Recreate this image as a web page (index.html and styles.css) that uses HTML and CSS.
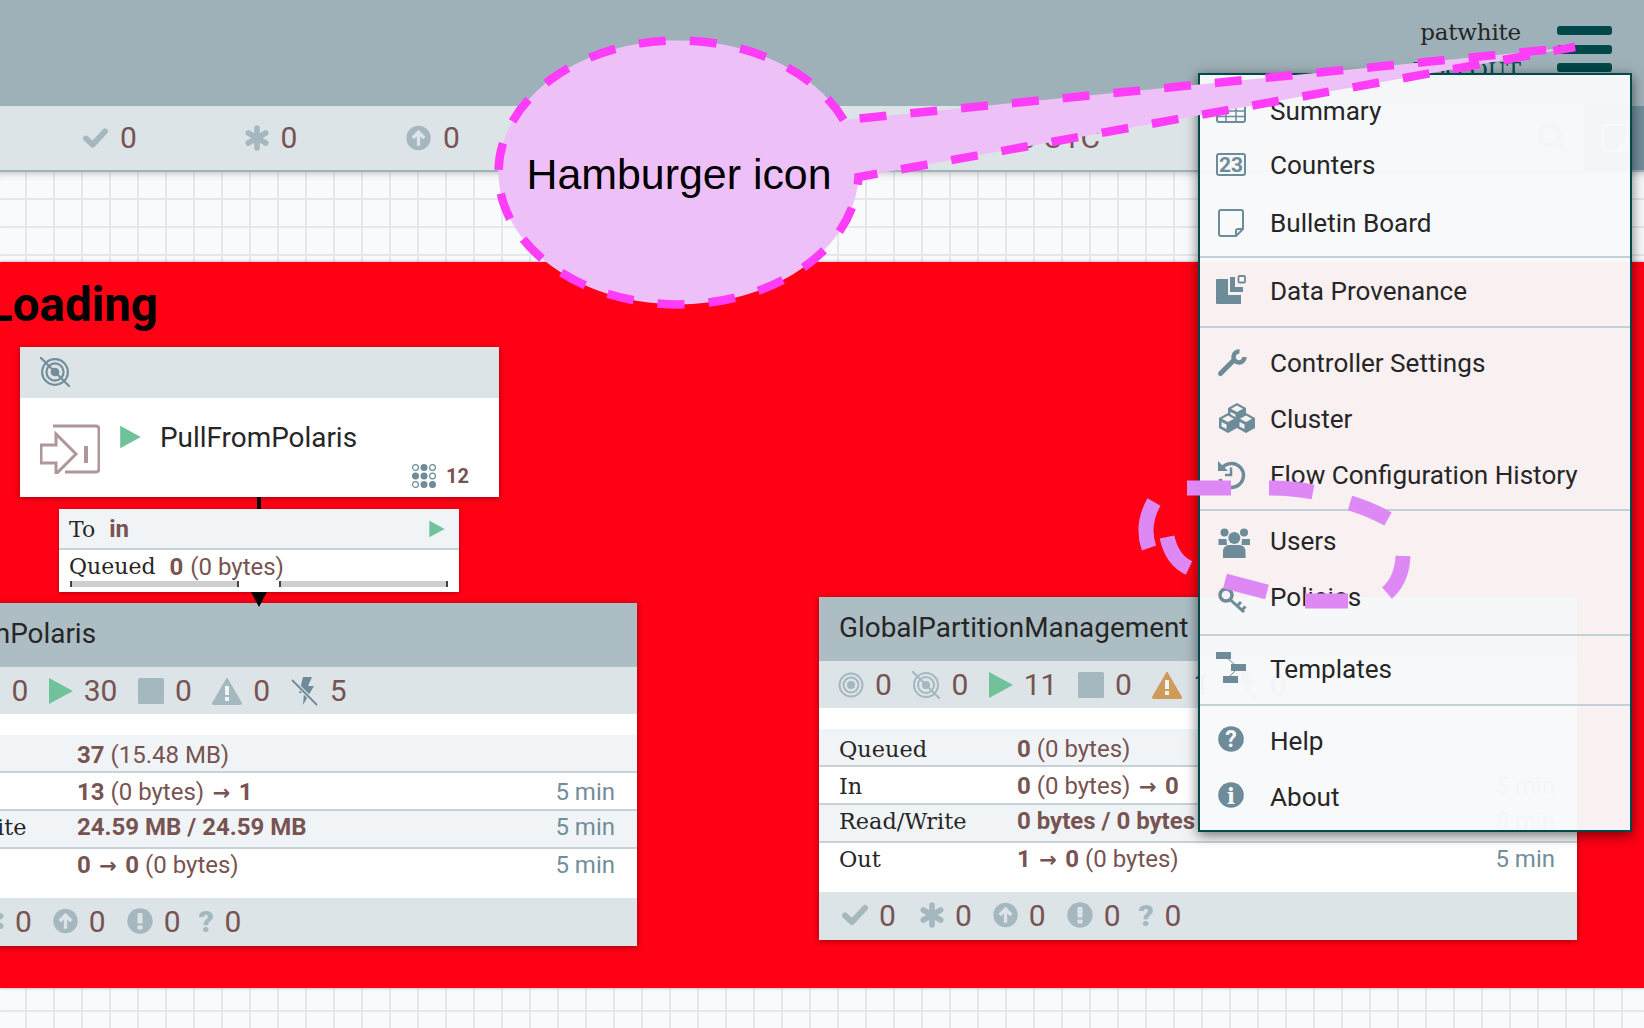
FILE: index.html
```html
<!DOCTYPE html>
<html lang="en">
<head>
<meta charset="utf-8">
<title>NiFi canvas</title>
<link rel="stylesheet" href="styles.css">
</head>
<body>
<svg class="defs" xmlns="http://www.w3.org/2000/svg">
  <symbol id="i-target" viewBox="0 0 26 26" overflow="visible"><circle cx="13" cy="13" r="11.500" fill="none" stroke="currentColor" stroke-width="2"/><circle cx="13" cy="13" r="7.500" fill="none" stroke="currentColor" stroke-width="2"/><circle cx="13" cy="13" r="4" fill="currentColor"/></symbol>
  <symbol id="i-notarget" viewBox="0 0 28 28" overflow="visible"><circle cx="14" cy="14" r="12" fill="none" stroke="currentColor" stroke-width="2"/><circle cx="14" cy="14" r="8" fill="none" stroke="currentColor" stroke-width="2"/><circle cx="14" cy="14" r="4" fill="currentColor"/><path d="M0 0L28 28" stroke="currentColor" stroke-width="2"/></symbol>
  <symbol id="i-play" viewBox="0 0 24 28"><path d="M0 1L24 14L0 27Z" fill="currentColor"/></symbol>
  <symbol id="i-stop" viewBox="0 0 26 26"><rect width="26" height="26" rx="1.500" fill="currentColor"/></symbol>
  <symbol id="i-warn" viewBox="0 0 30 28"><path d="M15 1L29.500 26a1 1 0 0 1-1 1.500H1.500a1 1 0 0 1-1-1.500Z" fill="currentColor" stroke="currentColor" stroke-linejoin="round"/><rect x="13" y="9" width="4" height="9" fill="#f1f4f6"/><rect x="13" y="20" width="4" height="4" fill="#f1f4f6"/></symbol>
  <symbol id="i-bolt" viewBox="0 0 28 30"><path d="M12 1h9l-4 9h6L12 29l1-12H8Z" fill="#6d8b98"/><path d="M1 4L26 29" stroke="#dde4e7" stroke-width="4"/><path d="M1 4L26 29" stroke="#6d8b98" stroke-width="1.800"/></symbol>
  <symbol id="i-check" viewBox="0 0 26 22"><path d="M3 11.500L10 18L23 4" fill="none" stroke="currentColor" stroke-width="6" stroke-linejoin="round" stroke-linecap="round"/></symbol>
  <symbol id="i-star" viewBox="0 0 24 26"><path d="M12 3v20M3.300 8l17.400 10M20.700 8L3.300 18" stroke="currentColor" stroke-width="5.600" stroke-linecap="round"/></symbol>
  <symbol id="i-up" viewBox="0 0 26 26"><circle cx="13" cy="13" r="12.700" fill="currentColor"/><path d="M13 21V8M7 13l6-6 6 6" fill="none" stroke="#dde4e7" stroke-width="3.500"/></symbol>
  <symbol id="i-bang" viewBox="0 0 26 26"><circle cx="13" cy="13" r="12.700" fill="currentColor"/><rect x="10.500" y="5" width="5" height="10.500" rx="1" fill="#dde4e7"/><rect x="10.500" y="17.500" width="5" height="4" rx="1" fill="#dde4e7"/></symbol>
  <symbol id="i-table" viewBox="0 0 32 32"><rect x="2" y="5" width="28" height="22" rx="2" fill="none" stroke="currentColor" stroke-width="2"/><path d="M2 10h28M2 16h28M2 21.500h28M11 10v17M21 10v17" stroke="currentColor" stroke-width="1.500"/></symbol>
  <symbol id="i-note" viewBox="0 0 32 32"><path d="M6 3h20a2 2 0 0 1 2 2v17l-7 7H6a2 2 0 0 1-2-2V5a2 2 0 0 1 2-2z" fill="none" stroke="currentColor" stroke-width="2" stroke-linejoin="round"/><path d="M28 22h-5a2 2 0 0 0-2 2v5" fill="none" stroke="currentColor" stroke-width="2"/></symbol>
  <symbol id="i-prov" viewBox="0 0 32 32"><path d="M2 4h11v16h13v9H2a1 1 0 0 1-1-1V5a1 1 0 0 1 1-1z" fill="currentColor"/><path d="M15 2h5v10h8v5H15z" fill="currentColor"/><rect x="23.500" y="1" width="6.500" height="6.500" rx="1" fill="#f8f9fa" stroke="currentColor" stroke-width="1.800"/></symbol>
  <symbol id="i-wrench" viewBox="0 0 32 32"><path d="M5.500 26.500L19 13" stroke="currentColor" stroke-width="5" stroke-linecap="round"/><path d="M24.500 4.500A5.500 5.500 0 1 0 29.500 10" fill="none" stroke="currentColor" stroke-width="4.500"/></symbol>
  <symbol id="i-cube" viewBox="0 0 20 22"><path d="M10 1L19 6V16L10 21L1 16V6Z" fill="currentColor"/><path d="M10 3.500L16 6.800L10 10L4 6.800Z" fill="#f7f2f2"/><path d="M3.500 10L8.500 12.500V17L3.500 14.500Z" fill="#f7f2f2"/></symbol>
  <symbol id="i-history" viewBox="0 0 32 32"><path d="M7 9A12 12 0 1 1 5 20" fill="none" stroke="currentColor" stroke-width="3.500"/><path d="M3 2v10h10Z" fill="currentColor"/><path d="M16 8.500V16H10" fill="none" stroke="currentColor" stroke-width="2.500"/></symbol>
  <symbol id="i-key" viewBox="0 0 32 32"><circle cx="11" cy="14" r="6" fill="none" stroke="currentColor" stroke-width="3.500"/><path d="M15 18.500L29 31M22 25l4-4M27 29l3.500-3.500" fill="none" stroke="currentColor" stroke-width="3"/></symbol>
  <symbol id="i-threads" viewBox="0 0 24 24"><g fill="currentColor"><circle cx="12" cy="3.500" r="3.500"/><circle cx="3.500" cy="12" r="3.500"/><circle cx="12" cy="12" r="3.500"/><circle cx="12" cy="20.500" r="3.500"/><circle cx="20.500" cy="20.500" r="3.500"/></g><g fill="none" stroke="currentColor" stroke-width="1.200"><circle cx="3.500" cy="3.500" r="2.900"/><circle cx="20.500" cy="3.500" r="2.900"/><circle cx="20.500" cy="12" r="2.900"/><circle cx="3.500" cy="20.500" r="2.900"/></g></symbol>
</svg>

<header class="top">
  <div class="user">
    <div class="user-name">patwhite</div>
    <div class="user-out">LOG OUT</div>
  </div>
  <div class="burger"><span></span><span></span><span></span></div>
</header>

<div class="toolbar">
  <div class="tb-item"><svg class="s-ic w25"><use href="#i-check"/></svg><span>0</span></div>
  <div class="tb-item"><svg class="s-ic w24"><use href="#i-star"/></svg><span>0</span></div>
  <div class="tb-item"><svg class="s-ic w25"><use href="#i-up"/></svg><span>0</span></div>
  <div class="tb-time">09:15:10 UTC</div>
  <div class="tb-search"><svg class="tb-search-ic" viewBox="0 0 32 32"><circle cx="13" cy="13" r="10" fill="none" stroke="currentColor" stroke-width="4"/><path d="M20 20l9 9" stroke="currentColor" stroke-width="4"/></svg></div>
  <div class="tb-note"><svg class="tb-note-ic"><use href="#i-note"/></svg></div>
</div>

<main class="canvas">
  <section class="red">
    <h1 class="red-title">Loading</h1>

    <article class="proc">
      <div class="proc-head"><svg class="proc-state"><use href="#i-notarget"/></svg></div>
      <div class="proc-body">
        <svg class="proc-port" viewBox="0 0 60 50"><path d="M13 2H56a3 3 0 0 1 3 3V45a3 3 0 0 1-3 3H25" fill="none" stroke="#ad9897" stroke-width="3"/><path d="M16 10L36 30L16 50V39H1V21H16Z" fill="none" stroke="#ad9897" stroke-width="3"/><rect x="44" y="22" width="4" height="17" fill="#ad9897"/></svg>
        <svg class="proc-play"><use href="#i-play"/></svg>
        <span class="proc-name">PullFromPolaris</span>
        <div class="proc-threads"><svg class="thr-ic"><use href="#i-threads"/></svg><b>12</b></div>
      </div>
    </article>

    <div class="wire"></div>

    <article class="conn">
      <div class="conn-to"><span class="slab">To</span><b>in</b><svg class="conn-play"><use href="#i-play"/></svg></div>
      <div class="conn-q"><span class="slab">Queued</span><b>0</b><span class="val">(0 bytes)</span></div>
      <div class="conn-bars"><i></i><i></i></div>
    </article>
    <div class="arrow"></div>

    <article class="group g-left">
      <div class="g-name">PullFromPolaris</div>
      <div class="g-status">
        <div class="st"><svg class="s-ic w26"><use href="#i-target"/></svg><span>0</span></div>
        <div class="st"><svg class="s-ic w28"><use href="#i-notarget"/></svg><span>0</span></div>
        <div class="st"><svg class="s-ic w24 play"><use href="#i-play"/></svg><span>30</span></div>
        <div class="st"><svg class="s-ic w26"><use href="#i-stop"/></svg><span>0</span></div>
        <div class="st"><svg class="s-ic w30"><use href="#i-warn"/></svg><span>0</span></div>
        <div class="st"><svg class="s-ic w28 tall"><use href="#i-bolt"/></svg><span>5</span></div>
      </div>
      <div class="g-rows">
        <div class="row"><span class="r-l">Queued</span><span class="r-v"><b>37</b> (15.48 MB)</span></div>
        <div class="row"><span class="r-l">In</span><span class="r-v"><b>13</b> (0 bytes) <span class="arr">→</span> <b>1</b></span><span class="r-t">5 min</span></div>
        <div class="row"><span class="r-l">Read/Write</span><span class="r-v"><b>24.59 MB / 24.59 MB</b></span><span class="r-t">5 min</span></div>
        <div class="row"><span class="r-l">Out</span><span class="r-v"><b>0</b> <span class="arr">→</span> <b>0</b> (0 bytes)</span><span class="r-t">5 min</span></div>
      </div>
      <div class="g-foot">
        <div class="st"><svg class="s-ic w26"><use href="#i-check"/></svg><span>0</span></div>
        <div class="st"><svg class="s-ic w24"><use href="#i-star"/></svg><span>0</span></div>
        <div class="st"><svg class="s-ic w25"><use href="#i-up"/></svg><span>0</span></div>
        <div class="st"><svg class="s-ic w26"><use href="#i-bang"/></svg><span>0</span></div>
        <div class="st"><span class="q">?</span><span>0</span></div>
      </div>
    </article>

    <article class="group g-right">
      <div class="g-name">GlobalPartitionManagement</div>
      <div class="g-status">
        <div class="st"><svg class="s-ic w26"><use href="#i-target"/></svg><span>0</span></div>
        <div class="st"><svg class="s-ic w28"><use href="#i-notarget"/></svg><span>0</span></div>
        <div class="st"><svg class="s-ic w24 play"><use href="#i-play"/></svg><span>11</span></div>
        <div class="st"><svg class="s-ic w26"><use href="#i-stop"/></svg><span>0</span></div>
        <div class="st"><svg class="s-ic w30 warn"><use href="#i-warn"/></svg><span>1</span></div>
        <div class="st"><svg class="s-ic w28 tall"><use href="#i-bolt"/></svg><span>0</span></div>
      </div>
      <div class="g-rows">
        <div class="row"><span class="r-l">Queued</span><span class="r-v"><b>0</b> (0 bytes)</span></div>
        <div class="row"><span class="r-l">In</span><span class="r-v"><b>0</b> (0 bytes) <span class="arr">→</span> <b>0</b></span><span class="r-t">5 min</span></div>
        <div class="row"><span class="r-l">Read/Write</span><span class="r-v"><b>0 bytes / 0 bytes</b></span><span class="r-t">5 min</span></div>
        <div class="row"><span class="r-l">Out</span><span class="r-v"><b>1</b> <span class="arr">→</span> <b>0</b> (0 bytes)</span><span class="r-t">5 min</span></div>
      </div>
      <div class="g-foot">
        <div class="st"><svg class="s-ic w26"><use href="#i-check"/></svg><span>0</span></div>
        <div class="st"><svg class="s-ic w24"><use href="#i-star"/></svg><span>0</span></div>
        <div class="st"><svg class="s-ic w25"><use href="#i-up"/></svg><span>0</span></div>
        <div class="st"><svg class="s-ic w26"><use href="#i-bang"/></svg><span>0</span></div>
        <div class="st"><span class="q">?</span><span>0</span></div>
      </div>
    </article>
  </section>
</main>

<nav class="menu">
  <div class="m-sec s1">
    <div class="m-item"><svg class="m-ic"><use href="#i-table"/></svg>Summary</div>
    <div class="m-item"><svg class="m-ic" viewBox="0 0 32 32"><rect x="2" y="5" width="28" height="21" rx="2" fill="none" stroke="currentColor" stroke-width="2"/><text class="m-ic-23" x="16" y="23" text-anchor="middle">23</text></svg>Counters</div>
    <div class="m-item"><svg class="m-ic"><use href="#i-note"/></svg>Bulletin Board</div>
  </div>
  <div class="m-sec s2">
    <div class="m-item"><svg class="m-ic"><use href="#i-prov"/></svg>Data Provenance</div>
  </div>
  <div class="m-sec s3">
    <div class="m-item"><svg class="m-ic"><use href="#i-wrench"/></svg>Controller Settings</div>
    <div class="m-item"><svg class="m-ic" viewBox="0 0 32 32"><use href="#i-cube" x="12" y="-1" width="20" height="22"/><use href="#i-cube" x="3" y="9" width="20" height="22"/><use href="#i-cube" x="21" y="9" width="20" height="22"/></svg>Cluster</div>
    <div class="m-item"><svg class="m-ic"><use href="#i-history"/></svg>Flow Configuration History</div>
  </div>
  <div class="m-sec s4">
    <div class="m-item"><svg class="m-ic" viewBox="0 0 32 32"><g fill="currentColor"><circle cx="9.500" cy="7.500" r="4"/><circle cx="29" cy="7.500" r="4"/><circle cx="19.300" cy="13" r="6"/><path d="M3.500 14h8l.5 6H3.500zM27 14h8v6h-8.500z"/><path d="M8 33V26a6 6 0 0 1 6-6h10.500a6 6 0 0 1 6 6v7z"/></g></svg>Users</div>
    <div class="m-item"><svg class="m-ic"><use href="#i-key"/></svg>Policies</div>
  </div>
  <div class="m-sec s5">
    <div class="m-item"><svg class="m-ic" viewBox="0 0 32 32"><g fill="currentColor"><rect x="1" y="-1" width="15" height="7"/><rect x="16" y="11" width="15" height="7"/><rect x="8" y="23" width="15" height="7"/></g><path d="M12 5L20 12M21 17L14 24" stroke="currentColor"/></svg>Templates</div>
  </div>
  <div class="m-sec s6">
    <div class="m-item"><svg class="m-ic" viewBox="0 0 32 32"><circle cx="16" cy="14" r="12.800" fill="currentColor"/><text class="m-ic-q" x="16" y="22" text-anchor="middle">?</text></svg>Help</div>
    <div class="m-item"><svg class="m-ic" viewBox="0 0 32 32"><circle cx="16" cy="14" r="12.800" fill="currentColor"/><text class="m-ic-i" x="16" y="23" text-anchor="middle">i</text></svg>About</div>
  </div>
</nav>

<svg class="overlay" viewBox="0 0 1644 1028" xmlns="http://www.w3.org/2000/svg">
  <path class="bubble" d="M843.700 120A180 132 0 1 0 858.400 177L1575 47Z"/>
  <text class="bubble-text" x="679" y="189" text-anchor="middle">Hamburger icon</text>
  <g class="scribble">
    <path d="M1187 488H1231"/>
    <path d="M1269 488Q1292 488 1313 492"/>
    <path d="M1350 503Q1370 509 1388 519"/>
    <path d="M1403 556Q1402 580 1387 593"/>
    <path d="M1305 601H1348"/>
    <path d="M1225 581L1267 592"/>
    <path d="M1189 568Q1172 560 1167 537"/>
    <path d="M1154 502Q1141 525 1149 548"/>
  </g>
</svg>
</body>
</html>
```
FILE: styles.css
```css
* { box-sizing: border-box; }
html, body { margin: 0; padding: 0; }
body {
  position: relative;
  width: 1644px;
  height: 1028px;
  overflow: hidden;
  display: flex;
  flex-direction: column;
  font-family: Roboto, sans-serif;
  color: #262626;
  background: #f9fafb;
}
.defs { display: none; }
b { font-weight: 700; }

/* top bar */
.top {
  flex: 0 0 106px;
  background: #9fb1b8;
  display: flex;
  justify-content: flex-end;
  padding: 17px 32px 0 0;
}
.user { text-align: right; margin-right: 36px; }
.user-name { font: 23px/30px "DejaVu Serif", serif; color: #262626; letter-spacing: -.2px; }
.user-out { font: 22px/30px "DejaVu Serif", serif; color: #004849; margin-top: 9px; }
.burger { width: 55px; display: flex; flex-direction: column; gap: 9.500px; padding-top: 9px; }
.burger span { height: 9px; border-radius: 3px; background: #004849; }

/* toolbar */
.toolbar {
  flex: 0 0 66px;
  background: #dde4e7;
  border-bottom: 2px solid #a0b2b9;
  display: flex;
  align-items: center;
  padding-left: 83px;
  color: #775351;
  font-size: 30px;
}
.tb-item { width: 161.500px; display: flex; align-items: center; gap: 12px; color: #775351; }
.tb-item span { margin-top: -2px; }
.tb-time { margin-left: auto; margin-right: 544px; margin-top: -2px; white-space: nowrap; }
.tb-search { position: absolute; left: 1520px; top: 106px; width: 65px; height: 64px; display: flex; align-items: center; justify-content: center; color: #6d8b98; background: #dde4e7; }
.tb-search-ic { width: 32px; height: 32px; }
.tb-note { position: absolute; left: 1585px; top: 106px; width: 59px; height: 64px; background: #728e9b; display: flex; align-items: center; justify-content: center; color: #f9fafb; }
.tb-note-ic { width: 32px; height: 32px; }

.s-ic { flex: none; height: 26px; color: #a6b8bf; display: block; }
.w24 { width: 24px; }
.w25 { width: 25px; }
.w26 { width: 26px; }
.w28 { width: 28px; height: 28px; }
.w30 { width: 30px; height: 28px; }
.tall { height: 30px; }
.play { color: #6fc29a; height: 28px; }
.warn { color: #d09a58; }

/* canvas */
.canvas {
  flex: 1;
  position: relative;
  background-color: #f9fafb;
  background-image:
    linear-gradient(to right, #e3e8eb 0 2px, transparent 2px),
    linear-gradient(to bottom, #e3e8eb 0 2px, transparent 2px);
  background-size: 28px 28px;
  background-position: -3px -2px;
  box-shadow: inset 0 8px 8px -8px rgba(0, 0, 0, .3);
}
.red {
  position: absolute;
  left: 0;
  right: 0;
  top: 90px;
  height: 726px;
  background: #ff0014;
  box-shadow: 0 0 3px rgba(0, 0, 0, .35);
}
.red-title {
  position: absolute;
  left: -13px;
  top: 15px;
  margin: 0;
  font: 700 47.500px/56px Roboto, sans-serif;
  color: #000;
}

/* processor */
.proc {
  position: absolute;
  left: 20px;
  top: 85px;
  width: 479px;
  height: 150px;
  background: #fff;
  box-shadow: 0 1px 6px rgba(0, 0, 0, .35);
}
.proc-head { height: 51px; background: #dde4e7; padding: 10px 0 0 20px; }
.proc-state { width: 30px; height: 30px; color: #728e9b; display: block; }
.proc-body { position: relative; height: 99px; display: flex; align-items: flex-start; padding: 18px 0 0 100px; }
.proc-port { position: absolute; left: 20px; top: 26px; width: 60px; height: 50px; }
.proc-play { width: 21px; height: 24px; color: #6fc29a; flex: none; margin-top: 9px; }
.proc-name { font-size: 27.900px; line-height: 40px; margin-left: 19px; margin-top: 2px; }
.proc-threads { position: absolute; right: 30px; bottom: 9px; display: flex; align-items: center; gap: 10px; color: #775351; font-size: 20px; }
.thr-ic { width: 24px; height: 24px; color: #6d8b98; }

.wire { position: absolute; left: 257px; top: 235px; width: 4px; height: 12px; background: #000; }
.arrow {
  position: absolute;
  left: 251px;
  top: 330px;
  width: 0;
  height: 0;
  border-left: 8px solid transparent;
  border-right: 8px solid transparent;
  border-top: 15px solid #000;
  z-index: 3;
}

/* connection label */
.conn {
  position: absolute;
  left: 59px;
  top: 247px;
  width: 400px;
  height: 83px;
  background: #fff;
  box-shadow: 0 1px 4px rgba(0, 0, 0, .3);
  color: #775351;
}
.conn-to { height: 41px; background: #f1f4f6; border-bottom: 2px solid #c7d2d7; display: flex; align-items: center; padding: 1px 14px 0 10px; font-size: 24px; gap: 14px; }
.conn-q { height: 31px; display: flex; align-items: center; padding: 2px 0 0 10px; font-size: 24px; gap: 14px; }
.conn-q .val { margin-left: -7px; }
.slab { font-family: "DejaVu Serif", serif; color: #262626; font-size: 22px; }
.conn-play { width: 16px; height: 18px; margin-left: auto; color: #6fc29a; }
.conn-bars { display: flex; justify-content: space-between; padding: 0 11px; }
.conn-bars i { display: block; width: 169px; height: 6px; background: #cfcfcf; border-left: 2px solid #444; border-right: 2px solid #444; }

/* process group */
.group {
  position: absolute;
  width: 758px;
  height: 343px;
  background: #fff;
  box-shadow: 0 1px 6px rgba(0, 0, 0, .4);
  display: flex;
  flex-direction: column;
}
.g-left { left: -121px; top: 341px; }
.g-right { left: 819px; top: 335px; }
.g-name { flex: 0 0 64px; background: #adbdc4; padding-left: 20px; font-size: 27.900px; line-height: 62px; }
.g-status, .g-foot {
  display: flex;
  align-items: center;
  background: #dde4e7;
  color: #775351;
  font-size: 30px;
}
.g-status { flex: 0 0 47px; padding-left: 19px; gap: 20.500px; }
.st { display: flex; align-items: center; gap: 11px; }
.q { font-weight: 900; font-size: 30px; color: #a6b8bf; width: 17px; }
.g-rows { flex: 1; padding: 21px 0 11px; }
.row {
  height: 38px;
  padding: 0 22px 0 20px;
  display: flex;
  align-items: center;
  border-bottom: 2px solid #c7d2d7;
  font-size: 24px;
  color: #775351;
}
.row:nth-child(odd) { background: #f1f4f6; }
.row:nth-child(1) { padding-top: 4px; }
.row:nth-child(2) { padding-top: 2px; }
.row:nth-child(3) { padding-bottom: 4px; }
.row:nth-child(4) { padding-bottom: 6px; border-bottom: 0; }
.r-l { flex: 0 0 178px; font: 22.400px "DejaVu Serif", serif; color: #262626; }
.r-t { margin-left: auto; color: #728e9b; }
.arr { font-family: "DejaVu Sans", sans-serif; font-size: 21px; font-weight: 700; line-height: 1; margin: 0 2.500px; }
.g-foot { flex: 0 0 48px; padding: 0 0 2px 23px; gap: 21px; }
.g-foot .st:first-child { margin-right: 3px; }
.g-foot .st:last-child { margin-left: -3px; gap: 9px; }

/* menu */
.menu {
  position: absolute;
  left: 1198px;
  top: 73px;
  width: 434px;
  height: 759px;
  background: rgba(248, 249, 250, .965);
  border: 2.500px solid #004849;
  box-shadow: 0 3px 12px rgba(0, 0, 0, .55);
  font-size: 26.100px;
  color: #262626;
}
.m-sec { border-bottom: 2.500px solid #c3d0d6; }
.m-sec:last-child { border-bottom: 0; }
.s1 { padding: 8px 0 5px; }
.s1 .m-item:nth-child(2) { padding-bottom: 4px; }
.s2 { padding: 5px 0 7px; }
.s3 { padding: 7px 0 6px; }
.s4 { padding: 2px 0 9px; }
.s5 { padding: 5px 0 7px; }
.s6 { padding: 7px 0 0; }
.m-item { height: 56px; display: flex; align-items: center; padding-left: 14px; white-space: nowrap; }
.m-ic { flex: none; width: 32px; height: 32px; margin-left: 1px; margin-right: 23px; color: #6d8b98; overflow: visible; }
.m-ic-23 { font: 700 21px Roboto, sans-serif; fill: currentColor; }
.m-ic-q { font: 700 23px Roboto, sans-serif; fill: #f8f9fa; }
.m-ic-i { font: 700 22px "DejaVu Serif", serif; fill: #f8f9fa; }

/* callout overlay */
.overlay { position: absolute; left: 0; top: 0; width: 1644px; height: 1028px; pointer-events: none; z-index: 10; }
.bubble { fill: #eec0f8; stroke: #ff3df8; stroke-width: 8.500; stroke-dasharray: 27 24; }
.bubble-text { font: 42.900px "Liberation Sans", Arial, sans-serif; fill: #000; }
.scribble path { fill: none; stroke: #dd88f5; stroke-width: 15; }
```
